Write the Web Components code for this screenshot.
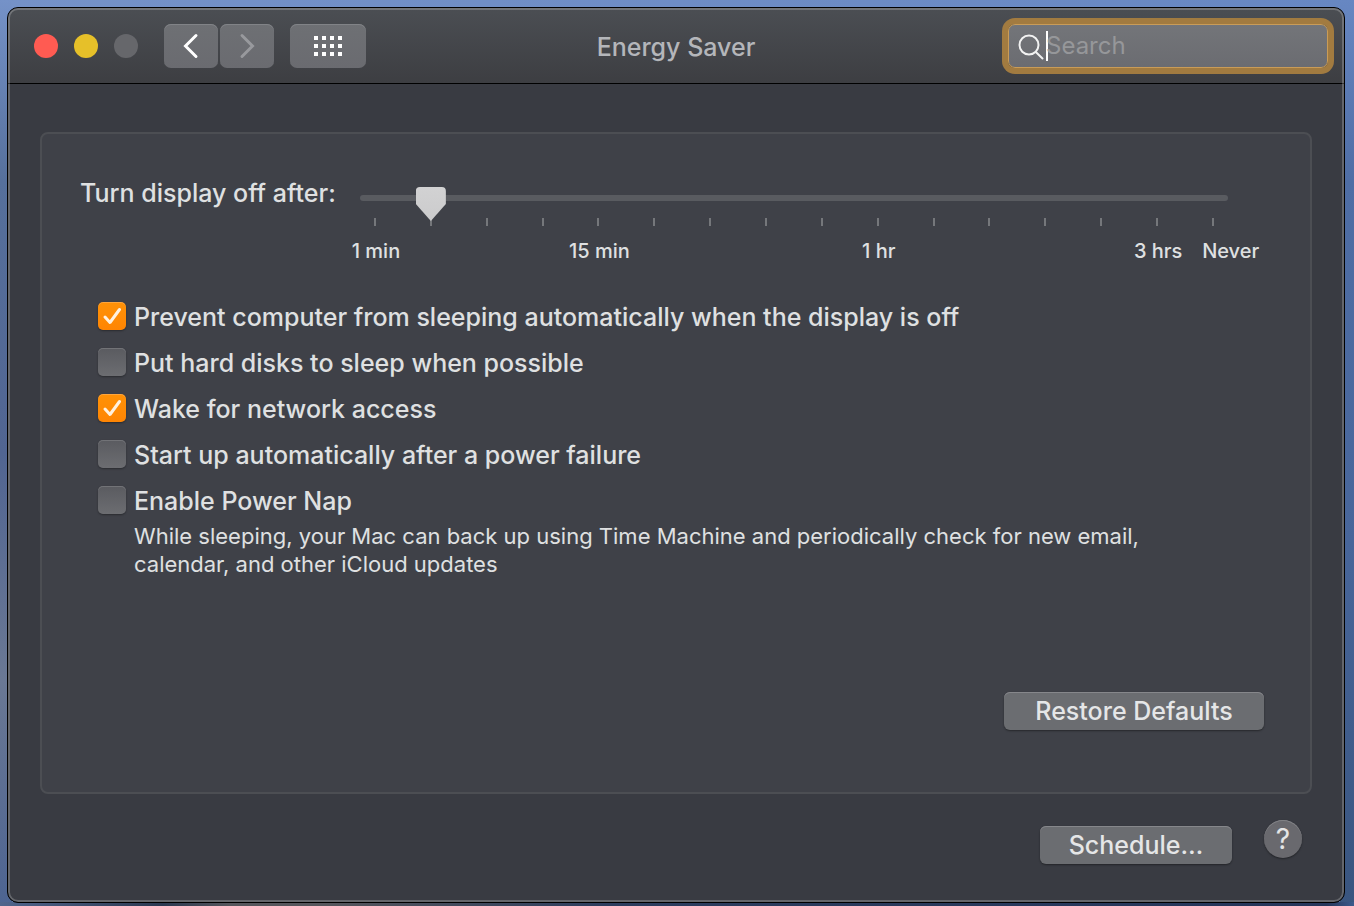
<!DOCTYPE html>
<html lang="en">
<head>
<meta charset="utf-8">
<title>Energy Saver</title>
<style>
  html { min-height: 100%; background: #3f5478; }
  body {
    margin: 0;
    padding: 7px 9px 3px 7px;
    box-sizing: border-box;
    min-height: 100vh;
    display: flex;
    font-family: Inter, "Liberation Sans", sans-serif;
    font-size: 25px;
    font-weight: 500;
    line-height: 32px;
    color: #dfe0e1;
    background:
      linear-gradient(90deg, #50658c 0, #2a3850 12%, #55565c 17%, #55565c 24%, #2c3d5e 45%, #25365a 98%, #3c5a8c 100%) bottom / 100% 4px no-repeat,
      linear-gradient(#7592c8, #56709c 20%, #516592 50%, #6a7894 75%, #4d6492) left / 12px 100% no-repeat,
      linear-gradient(#6787c2, #4f6ea5 20%, #48669a 60%, #39557f) right / 14px 100% no-repeat,
      linear-gradient(90deg, #7592c8, #6787c2);
  }
  prefs-window { flex: 1; }
</style>
</head>
<body>
<prefs-window>
  <prefs-toolbar slot="toolbar">
    <traffic-lights slot="start"></traffic-lights>
    <nav-buttons slot="start"></nav-buttons>
    Energy Saver
    <search-field slot="end" placeholder="Search"></search-field>
  </prefs-toolbar>
  <group-panel>
    <timeout-slider>Turn display off after:</timeout-slider>
    <option-list>
      <check-option checked>Prevent computer from sleeping automatically when the display is off</check-option>
      <check-option>Put hard disks to sleep when possible</check-option>
      <check-option checked>Wake for network access</check-option>
      <check-option>Start up automatically after a power failure</check-option>
      <check-option>Enable Power Nap
        <span slot="note">While sleeping, your Mac can back up using Time Machine and periodically check for new email, calendar, and other iCloud updates</span>
      </check-option>
    </option-list>
    <push-button slot="action" style="--width: 260px">Restore Defaults</push-button>
  </group-panel>
  <push-button slot="footer" style="--width: 192px">Schedule…</push-button>
  <help-button slot="footer"></help-button>
</prefs-window>

<script>
const define = (name, html, setup) => {
  const template = document.createElement('template');
  template.innerHTML = html;
  customElements.define(name, class extends HTMLElement {
    constructor() {
      super();
      this.attachShadow({ mode: 'open' }).append(template.content.cloneNode(true));
    }
    connectedCallback() { if (setup) setup(this, this.shadowRoot); }
  });
};

define('prefs-window', `
  <style>
    :host { display: flex; flex-direction: column; box-sizing: border-box; position: relative;
      border: 1px solid #000; border-radius: 11px; overflow: hidden; background: #393b42; }
    /* light inner rim that runs round the whole window */
    :host::after { content: ""; position: absolute; inset: 0; border: 2px solid rgba(255,255,255,.22);
      border-radius: 10px; pointer-events: none; }
    main { flex: 1; display: flex; flex-direction: column; padding: 48px 32px 0; }
    ::slotted(group-panel) { flex: 1; }
    footer { display: flex; justify-content: flex-end; align-items: flex-start; gap: 32px;
      padding: 32px 10px 38px; }
    ::slotted(help-button) { margin-top: -6px; }
  </style>
  <slot name="toolbar"></slot>
  <main><slot></slot><footer><slot name="footer"></slot></footer></main>
`);

define('prefs-toolbar', `
  <style>
    :host { display: grid; grid-template-columns: 1fr auto 1fr; align-items: center;
      padding: 10px 0 9px; border-bottom: 1px solid #000;
      background: linear-gradient(#4b4e53, #3d3e42); }
    .start { display: flex; align-items: center; gap: 26px; margin-left: 26px; }
    h1 { margin: 2px 0 0; font: inherit; color: #b4b6ba; }
    .end { justify-self: end; margin-right: 10px; }
  </style>
  <div class="start"><slot name="start"></slot></div>
  <h1><slot></slot></h1>
  <div class="end"><slot name="end"></slot></div>
`);

define('traffic-lights', `
  <style>
    :host { display: flex; gap: 16px; }
    button { width: 24px; height: 24px; padding: 0; border: 0; border-radius: 50%; }
    .close { background: #ff5b52; }
    .min { background: #e6c029; }
    .zoom { background: #66676b; }
  </style>
  <button class="close" aria-label="Close"></button>
  <button class="min" aria-label="Minimize"></button>
  <button class="zoom" aria-label="Zoom" disabled></button>
`);

define('nav-buttons', `
  <style>
    :host { display: flex; gap: 2px; }
    button { width: 54px; height: 44px; padding: 0; border: 0; border-radius: 7px;
      display: grid; place-items: center; color: #fff;
      background: linear-gradient(#6e7074, #6a6b70); box-shadow: inset 0 1px #818387; }
    .all { width: 76px; margin-left: 14px; }
    svg { display: block; fill: none; stroke: currentColor; stroke-width: 3; stroke-linecap: round; }
    [disabled] { color: #98999d; }
  </style>
  <button aria-label="Back"><svg width="54" height="44"><path d="M32 11.500L21.500 22L32 32.500"/></svg></button>
  <button aria-label="Forward" disabled><svg width="54" height="44"><path d="M22 11.500L32.500 22L22 32.500"/></svg></button>
  <button class="all" aria-label="Show All"><svg width="76" height="44" style="stroke:none;fill:#fff">
    <path d="M24 12h4v4h-4zM32 12h4v4h-4zM40 12h4v4h-4zM48 12h4v4h-4zM24 20h4v4h-4zM32 20h4v4h-4zM40 20h4v4h-4zM48 20h4v4h-4zM24 28h4v4h-4zM32 28h4v4h-4zM40 28h4v4h-4zM48 28h4v4h-4z"/></svg></button>
`);

define('search-field', `
  <style>
    :host { display: block; width: 332px; }
    label { display: flex; align-items: center; box-sizing: border-box; height: 44px; margin: 6px;
      padding-left: 8px; border: 1px solid #c99c58; border-radius: 7px;
      background: linear-gradient(#737579, #6b6c71); box-shadow: 0 0 0 6px #a27b40; }
    svg { display: block; flex: none; fill: none; stroke: #f2f2f2; stroke-width: 2; stroke-linecap: round; }
    .caret { width: 2px; height: 30px; background: #fff; margin-left: 1px; margin-right: -2px; flex: none; }
    input { flex: 1; min-width: 0; height: 40px; padding: 0 0 2px; border: 0; outline: 0; background: none;
      font: inherit; font-size: 24px; font-weight: 400; color: #fff; }
    input::placeholder { color: #96979a; opacity: 1; }
  </style>
  <label><svg width="28" height="28" viewBox="0 0 28 28" aria-hidden="true"><circle cx="12" cy="13" r="9.500"/><path d="M18.800 20L25.500 26.500"/></svg>
    <span class="caret"></span><input type="search" aria-label="Search"></label>
`, (el, root) => { root.querySelector('input').placeholder = el.getAttribute('placeholder'); });

define('group-panel', `
  <style>
    :host { display: flex; flex-direction: column; box-sizing: border-box; min-height: 560px;
      border: 2px solid #4c4e53; border-radius: 8px; background: #3f4148;
      padding: 43px 46px 62px 38px; }
    .action { margin-top: auto; align-self: flex-end; }
  </style>
  <slot></slot>
  <div class="action"><slot name="action"></slot></div>
`);

define('timeout-slider', `
  <style>
    :host { display: flex; gap: 20px; padding-right: 36px; }
    label { flex: 0 0 260px; white-space: nowrap; }
    .scale { flex: 1; padding-top: 9px; }
    input { -webkit-appearance: none; appearance: none; display: block; position: relative; z-index: 1;
      width: 100%; height: 36px; margin: 0; background: none; }
    input::-webkit-slider-runnable-track { height: 6px; border-radius: 3px; background: #595b60; margin-bottom: 12px; }
    input::-webkit-slider-thumb { -webkit-appearance: none; width: 30px; height: 34px; margin-top: -8px;
      background: linear-gradient(#d2d2d3, #cbcbcc);
      clip-path: path("M4 0H26Q30 0 30 4V17L15 34L0 17V4Q0 0 4 0Z"); }
    .ticks { display: flex; justify-content: space-between; padding: 0 14px; margin-top: -4px; }
    .ticks i { width: 2px; height: 8px; background: #75777b; }
    .labels { display: grid; grid-template-columns: repeat(16, minmax(0, 1fr)); margin: 12px -14px 0 -12px;
      font-size: 20px; line-height: 26px; white-space: nowrap; }
    .labels span { justify-self: center; }
    .labels .last { justify-self: start; margin-left: 16px; }
  </style>
  <label for="range"><slot></slot></label>
  <div class="scale">
    <input id="range" type="range" min="0" max="15" value="1">
    <div class="ticks"></div>
    <div class="labels">
      <span style="grid-column: 1">1 min</span>
      <span style="grid-column: 5">15 min</span>
      <span style="grid-column: 10">1 hr</span>
      <span style="grid-column: 15">3 hrs</span>
      <span class="last" style="grid-column: 16">Never</span>
    </div>
  </div>
`, (el, root) => {
  root.querySelector('.ticks').innerHTML = '<i></i>'.repeat(16);
});

define('option-list', `
  <style>:host { display: flex; flex-direction: column; gap: 14px; margin: 37px 0 32px 18px; }</style>
  <slot></slot>
`);

define('check-option', `
  <style>
    :host { display: block; }
    label { display: flex; align-items: flex-start; gap: 8px; }
    input { -webkit-appearance: none; appearance: none; flex: none; width: 28px; height: 28px; margin: 1px 0 0;
      border-radius: 5px; background: linear-gradient(#5a5b60, #6c6d71);
      box-shadow: inset 0 1px #727377, 0 1px 2px rgba(0,0,0,.35); }
    input:checked { box-shadow: inset 0 1px #ffa63c, 0 1px 2px rgba(0,0,0,.35);
      background: url('data:image/svg+xml,<svg xmlns="http://www.w3.org/2000/svg" width="28" height="28"><path d="M7 15L12 20.500L21.500 7.500" fill="none" stroke="%23fff1df" stroke-width="3" stroke-linecap="round" stroke-linejoin="round"/></svg>'),
        linear-gradient(#ff9207, #ff8503); }
    .note { padding-left: 36px; max-width: 1030px; margin-top: 5px; font-size: 22px; font-weight: 400; line-height: 28px; }
  </style>
  <label><input type="checkbox"><span><slot></slot></span></label>
  <div class="note"><slot name="note"></slot></div>
`, (el, root) => {
  root.querySelector('input').checked = el.hasAttribute('checked');
  root.querySelector('.note').hidden = !el.querySelector('[slot=note]');
});

define('push-button', `
  <style>
    :host { display: block; }
    button { display: block; width: var(--width); height: 38px; padding: 0; border: 0; border-radius: 6px;
      font: inherit; color: #e5e6e7; background: #6b6d71;
      box-shadow: inset 0 1px #86878b, 0 1px 2px rgba(0,0,0,.4); }
  </style>
  <button type="button"><slot></slot></button>
`);

define('help-button', `
  <style>
    :host { display: block; }
    button { display: block; width: 38px; height: 38px; padding: 0; border: 0; border-radius: 50%;
      font: inherit; font-size: 28px; font-weight: 400; color: #e4e5e6; background: #69696e;
      box-shadow: inset 0 1px #828387, 0 1px 2px rgba(0,0,0,.4); }
  </style>
  <button type="button" title="Help">?</button>
`);
</script>
</body>
</html>
